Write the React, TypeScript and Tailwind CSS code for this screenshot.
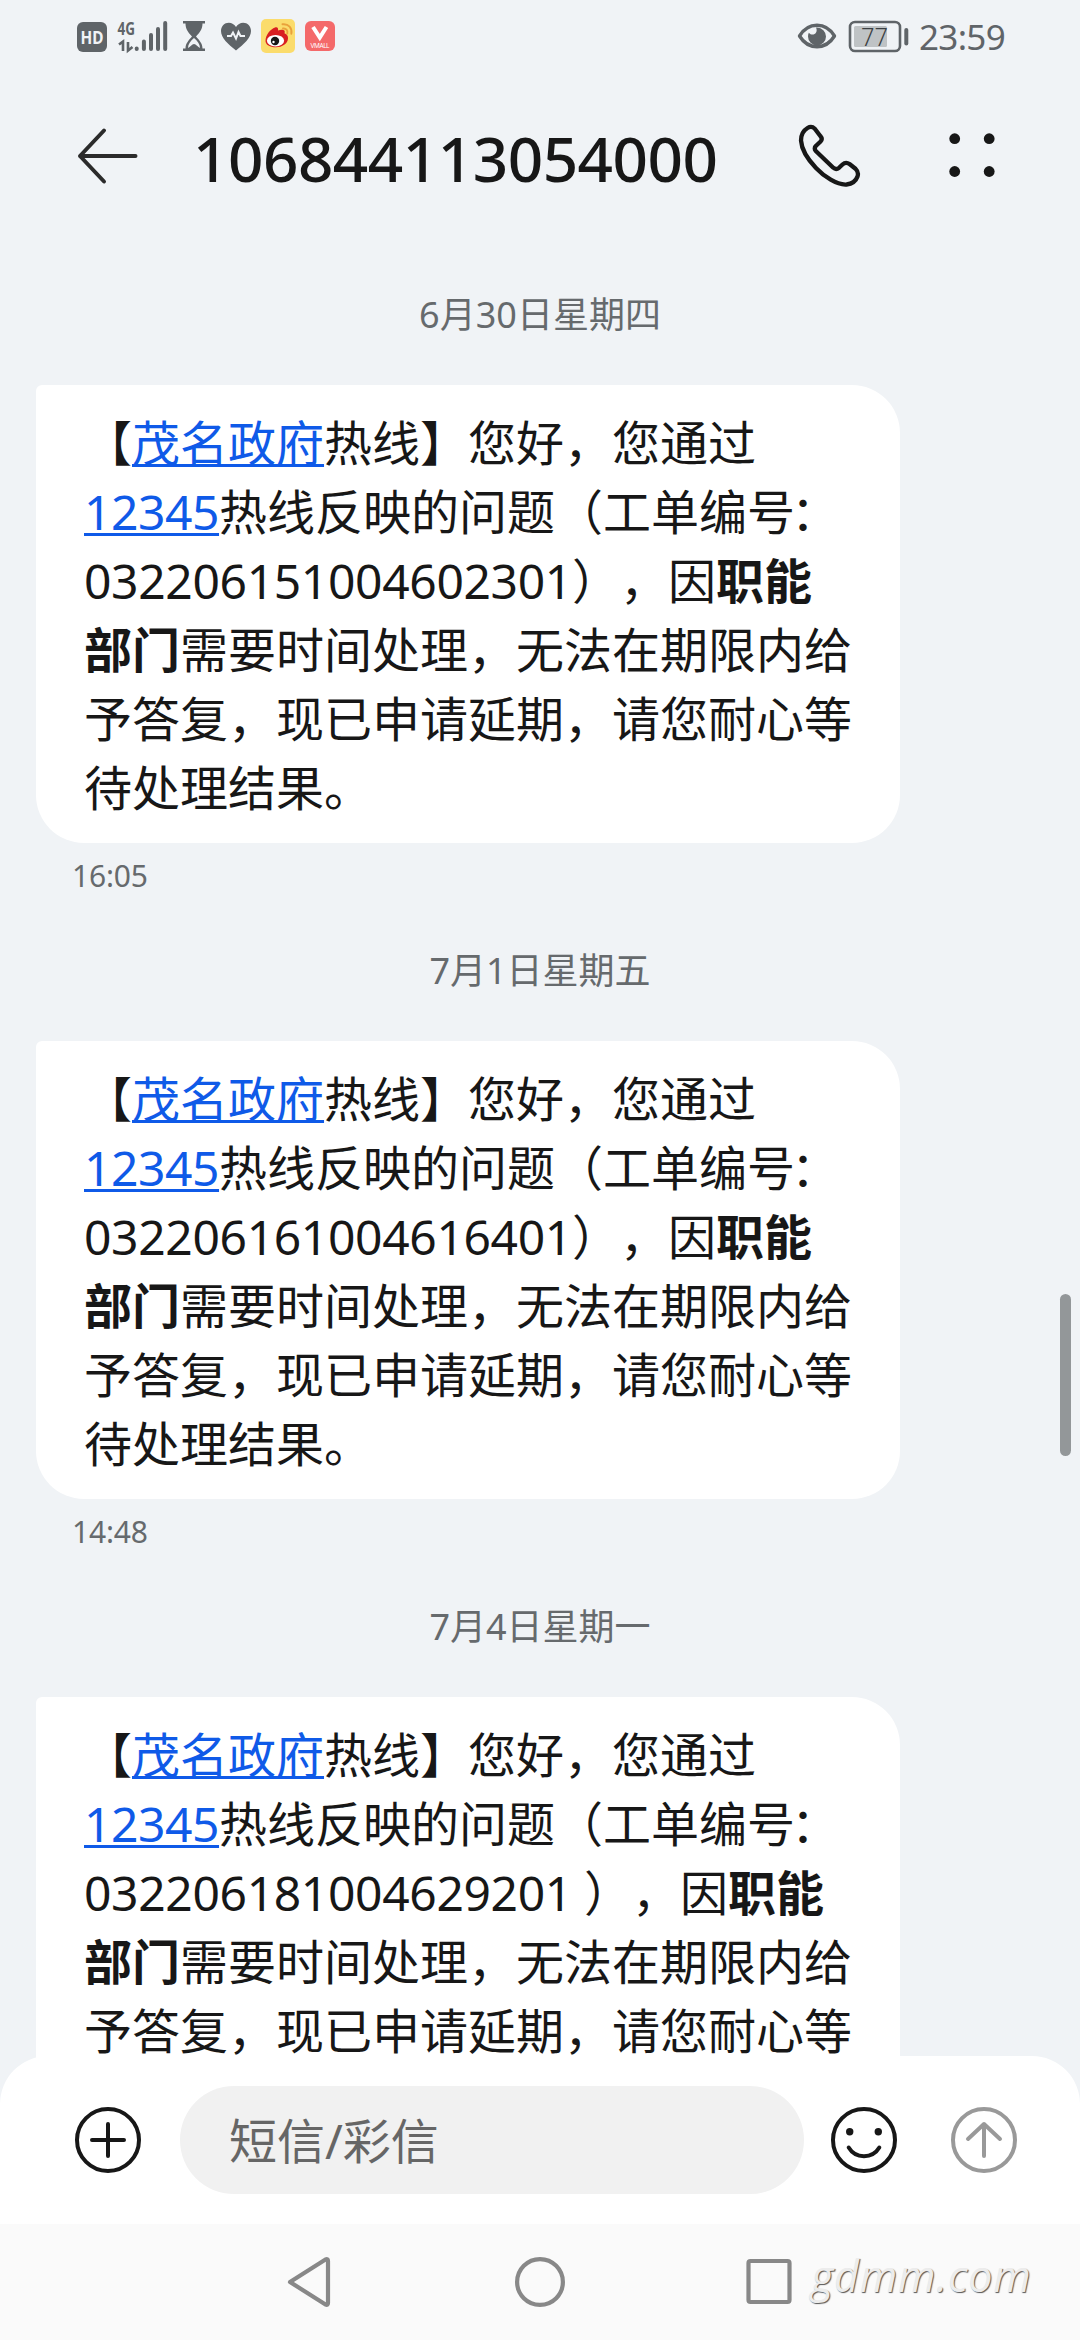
type Message = {
  date: string;
  orderNo: string;
  time?: string;
};

const messages: Message[] = [
  { date: "6月30日星期四", orderNo: "032206151004602301", time: "16:05" },
  { date: "7月1日星期五", orderNo: "032206161004616401", time: "14:48" },
  { date: "7月4日星期一", orderNo: "032206181004629201 " },
];

const StatusBar = () => (
  <div className="flex h-[72px] shrink-0 items-center justify-between pl-[77px] pr-[76px] text-[#5f6468]">
    <svg width="260" height="72" viewBox="77 0 260 72" fill="currentColor">
      {/* HD */}
      <rect x="77" y="22" width="30" height="30" rx="6" />
      <text x="92" y="44" fontSize="18" fontWeight="700" fill="#f0f3f6" textAnchor="middle" textLength="23" lengthAdjust="spacingAndGlyphs">HD</text>
      {/* signal */}
      <text x="117.5" y="35" fontSize="18" fontWeight="700" textLength="17.5" lengthAdjust="spacingAndGlyphs">4G</text>
      <path d="M119 44.500l4-3v9.500M128 42v8.500l4.500-3.500" fill="none" stroke="currentColor" strokeWidth="2.600" />
      <g stroke="currentColor" strokeWidth="4" strokeLinecap="round">
        <path d="M136.700 48.500v.5M143.900 41.500v7.500M151 35v14M158 29v20M165.200 23v26" />
      </g>
      {/* hourglass */}
      <path d="M183 21h22v2.500h-2.500c0 6-3 9-6.500 13 3.500 4 6.500 7 6.500 12h2.500V51h-22v-2.500h2.500c0-5 3-8 6.500-12-3.500-4-6.500-7-6.500-13H183z" />
      <path d="M188 48c0-4 2.500-7 6-10 3.500 3 6 6 6 10-2-1-4-4-6-4s-4 3-6 4z" fill="#f0f3f6" />
      {/* heart rate */}
      <path d="M236 50.500C228 44 221 38 221 31c0-5 3.500-8.300 7.800-8.300 3 0 5.700 1.600 7.200 4.300 1.500-2.700 4.200-4.300 7.200-4.300 4.300 0 7.800 3.300 7.800 8.300 0 7-7 13-15 19.500z" />
      <path d="M227 36h4l2-3.500 3 6 2.500-6.500 2 4H245" fill="none" stroke="#f0f3f6" strokeWidth="2" />
      {/* weibo */}
      <rect x="261" y="19" width="34" height="34" rx="5" fill="#fbdc6c" />
      <path d="M265.500 41c0-6 5-12 9.500-13.500 2.500-.8 3.500.6 3 3 3.500-1.500 8-1.200 6.500 2.800 3 1 3.500 3 3.500 5.200 0 5-6 8.800-12 8.800s-10.500-2.500-10.500-6.300z" fill="#d81e21" />
      <ellipse cx="275.500" cy="40.700" rx="8.600" ry="5.800" fill="#fff" />
      <circle cx="275" cy="41" r="4.200" fill="#171717" />
      <circle cx="273.500" cy="42" r="1.200" fill="#fff" />
      <path d="M283 28.500c3-.5 5 2 4.300 5M282.500 24.300c6-.8 10 4 8.800 9.500" fill="none" stroke="#e9a23b" strokeWidth="1.900" strokeLinecap="round" />
      {/* vmall */}
      <rect x="305" y="21" width="30" height="30" rx="6" fill="#f4696a" />
      <path d="M313 27l6.800 10.500L326.500 27" fill="none" stroke="#fff" strokeWidth="4" />
      <text x="320" y="47.500" fontSize="6.500" fill="#fff" textAnchor="middle" textLength="19">VMALL</text>
    </svg>
    <div className="flex items-center">
      <svg width="112" height="72" viewBox="795 0 112 72" fill="none" stroke="currentColor">
        <path d="M797.500 36c4-6.500 10.500-10.700 17.500-10.700S828.500 29.500 832.500 36c-4 6.500-10.500 10.700-17.500 10.700S801.500 42.500 797.500 36z" strokeWidth="3.400" strokeLinejoin="round" />
        <path d="M815 27.500a9 9 0 1 1-9 9c0-1.500.3-2.700.8-3.800 3.500 4.300 10 .8 7.200-5.200z" fill="currentColor" stroke="none" />
        <rect x="848" y="22" width="50" height="29" rx="5" strokeWidth="2.600" />
        <rect x="852" y="26" width="33" height="21" rx="1.500" fill="#bfc3c5" stroke="none" />
        <path d="M904.300 30v13.500" strokeWidth="4" strokeLinecap="round" />
        <text x="872.500" y="45.500" fontSize="26" fill="#3b3f42" stroke="none" textAnchor="middle" textLength="27" lengthAdjust="spacingAndGlyphs" fontWeight="300">77</text>
      </svg>
      <span className="ml-2.5 mt-0.5 w-[85px] whitespace-nowrap text-[35px] leading-10 tracking-[-0.7px]">23:59</span>
    </div>
  </div>
);

const Header = () => (
  <header className="flex h-[168px] shrink-0 items-center pl-[76px] text-[#171717]">
    <svg width="64" height="64" viewBox="0 0 64 64" fill="none" stroke="#2b2b2b" strokeWidth="4" strokeLinecap="round" strokeLinejoin="round">
      <path d="M59.500 32H4L28 6.500M4 32l24 25.500" />
    </svg>
    <h1 className="ml-[53px] mt-[3px] w-[558px] whitespace-nowrap text-[62px] font-medium leading-[80px] tracking-[-0.5px]">106844113054000</h1>
    <svg className="ml-[46px]" width="64" height="64" viewBox="0 0 64 64" fill="none" stroke="currentColor" strokeWidth="4.300" strokeLinejoin="round">
      <path d="M17.800 4.700L23.500 12.200Q26 15 23.300 17.800L18.800 22Q16.800 24.300 18.800 27L36 43.500Q39 46.300 42 43.800L45.500 40.500Q48.800 37.500 52.500 40L58.500 44.700Q62 48 60.500 52.500Q58 59.500 49.500 60.500C40 61.200 27 52.500 19 44C10 34.500 4.500 24.500 4 16.500C4 9.500 8 5.500 10.500 4Q14.500 1.500 17.800 4.700Z" />
    </svg>
    <svg className="ml-[83px]" width="56" height="64" viewBox="0 0 56 64" fill="currentColor">
      <circle cx="10.700" cy="14.700" r="5.400" />
      <circle cx="45.200" cy="14.700" r="5.400" />
      <circle cx="10.700" cy="47.500" r="5.400" />
      <circle cx="45.200" cy="47.500" r="5.400" />
    </svg>
  </header>
);

const MessageBlock = ({ date, orderNo, time }: Message) => (
  <section className="pt-12">
    <p className="h-[54px] text-center text-[36px] leading-[54px] text-[#666a6d]">{date}</p>
    <div className="ml-9 mt-[43px] h-[458px] w-[864px] whitespace-pre rounded-[48px] rounded-tl-[6px] bg-white pl-12 pt-[23px] text-[48px] leading-[69px] text-[#171717]">
      <p>
        【<a className="text-[#0f5ae8] underline decoration-[3px] underline-offset-[3px] [text-decoration-skip-ink:none]">茂名政府</a>热线】您好，您通过
      </p>
      <p>
        <a className="tracking-[-0.45px] text-[#0f5ae8] underline decoration-[3px] underline-offset-[3px] [text-decoration-skip-ink:none]">12345</a>热线反映的问题（工单编号<span className="-ml-1">：</span>
      </p>
      <p>
        <span className="tracking-[-0.35px]">{orderNo}</span>），因<b>职能</b>
      </p>
      <p>
        <b>部门</b>需要时间处理，无法在期限内给
      </p>
      <p>予答复，现已申请延期，请您耐心等</p>
      {time && <p>待处理结果。</p>}
    </div>
    <p className="mt-[15px] h-[38px] pl-[72px] text-[30px] leading-9 tracking-[-0.2px] text-[#666a6d]">{time}</p>
  </section>
);

const Composer = () => (
  <div className="relative -mt-12 flex h-[168px] shrink-0 items-center rounded-t-[48px] bg-white pl-[74px] text-[#171717]">
    <svg width="68" height="68" viewBox="0 0 68 68" fill="none" stroke="currentColor" strokeWidth="4" strokeLinecap="round">
      <circle cx="34" cy="34" r="31" />
      <path d="M34 18v32M18 34h32" />
    </svg>
    <div className="ml-[38px] flex h-[108px] w-[624px] items-center rounded-full bg-[#f1f1f1] pl-[49px] pt-0.5 text-[48px] text-[#666]">短信/彩信</div>
    <svg className="ml-[26px]" width="68" height="68" viewBox="0 0 68 68" fill="none" stroke="currentColor" strokeWidth="4" strokeLinecap="round">
      <circle cx="34" cy="34" r="31" />
      <circle cx="19.700" cy="25.700" r="3.700" fill="currentColor" stroke="none" />
      <circle cx="48.300" cy="25.700" r="3.700" fill="currentColor" stroke="none" />
      <path d="M18.700 41.500C25.500 53 42.500 53 49.300 41.500" />
    </svg>
    <svg className="ml-[52px] text-[#999]" width="68" height="68" viewBox="0 0 68 68" fill="none" stroke="currentColor" strokeWidth="4" strokeLinecap="round" strokeLinejoin="round">
      <circle cx="34" cy="34" r="31" />
      <path d="M34 50V18M18 33L34 18l16 15" />
    </svg>
  </div>
);

const NavBar = () => (
  <nav className="flex h-[116px] shrink-0 items-center bg-[#fafafa] pl-[284px]">
    <svg width="512" height="56" viewBox="284 2254 512 56" fill="none" stroke="#888" strokeWidth="4.200" strokeLinejoin="round">
      <path d="M290 2282L325.500 2259.500Q328 2258.500 328 2261V2303Q328 2305.500 325.500 2304.500Z" />
      <circle cx="540" cy="2282" r="22.900" />
      <rect x="748.500" y="2261" width="41" height="41" rx="2" />
    </svg>
    <span className="mb-3 ml-[15px] w-[240px] whitespace-nowrap font-['Open_Sans',sans-serif] text-[43px] italic leading-[56px] tracking-[0.8px] text-[#ececec] [text-shadow:1px_1px_1px_#555]">gdmm.com</span>
  </nav>
);

const App = () => (
  <div
    lang="zh-CN"
    className="relative flex h-[2340px] w-[1080px] flex-col overflow-hidden bg-[#f0f3f6] font-['Noto_Sans','Noto_Sans_CJK_SC',sans-serif] [text-spacing-trim:space-all]"
  >
    <StatusBar />
    <Header />
    <main className="min-h-0 flex-1 overflow-hidden">
      {messages.map((message) => (
        <MessageBlock key={message.date} {...message} />
      ))}
    </main>
    <div className="absolute right-[9px] top-[1294px] h-[162px] w-[11px] rounded-full bg-[#939799]" />
    <Composer />
    <NavBar />
  </div>
);

export default App;
